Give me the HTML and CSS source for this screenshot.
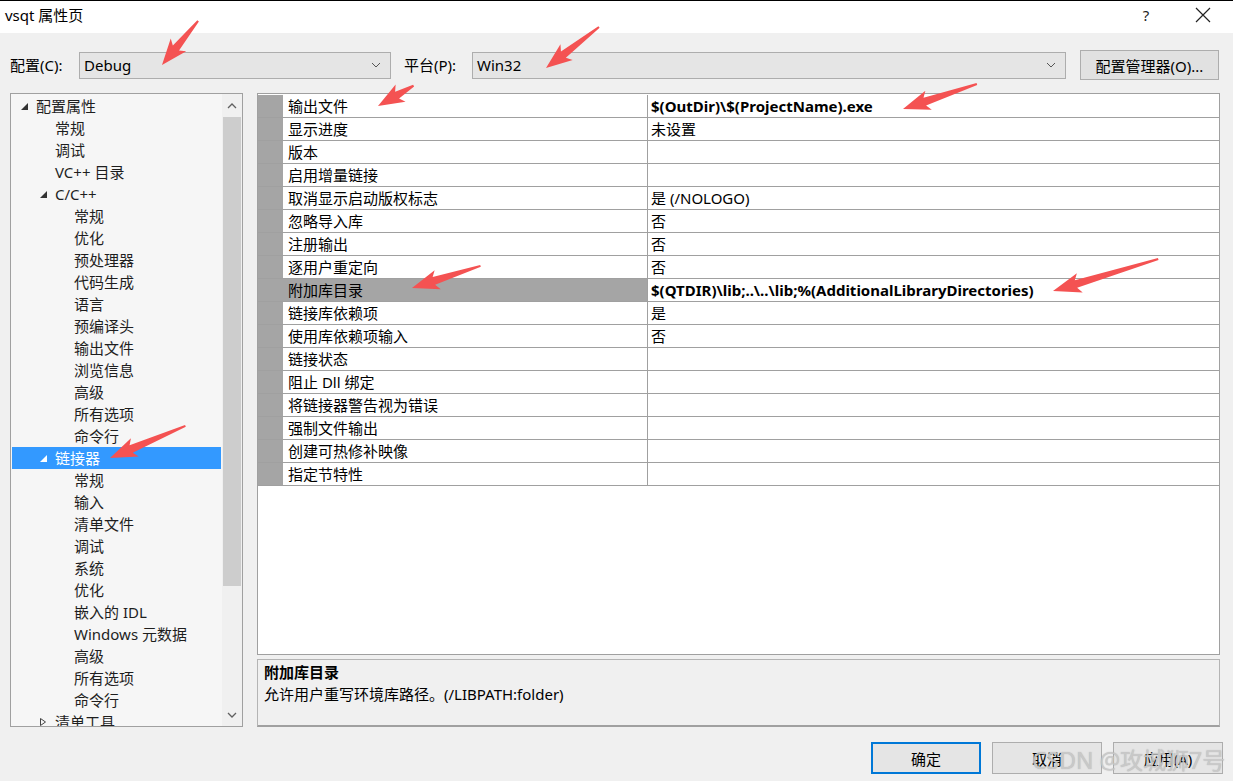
FILE: index.html
```html
<!DOCTYPE html>
<html lang="zh-CN">
<head>
    <meta charset="UTF-8">
    <title>vsqt 属性页</title>
    <link rel="stylesheet" href="styles.css">
</head>
<body>
    <!-- Title bar -->
    <div class="titlebar">
        <span class="title">vsqt 属性页</span>
        <div class="title-buttons">
            <span class="help">?</span>
            <svg class="close" width="16" height="16" viewBox="0 0 16 16">
                <path d="M1 1 L15 15 M15 1 L1 15" stroke="#222" stroke-width="1.2" fill="none"/>
            </svg>
        </div>
    </div>

    <!-- Configuration row -->
    <div class="config-row">
        <label class="cfg-label">配置(C):</label>
        <div class="combo combo-config">
            <span>Debug</span>
            <svg class="chevron" width="10" height="6" viewBox="0 0 10 6"><path d="M1 1 L5 5 L9 1" stroke="#555" fill="none"/></svg>
        </div>
        <label class="cfg-label platform-label">平台(P):</label>
        <div class="combo combo-platform">
            <span>Win32</span>
            <svg class="chevron" width="10" height="6" viewBox="0 0 10 6"><path d="M1 1 L5 5 L9 1" stroke="#555" fill="none"/></svg>
        </div>
        <button class="btn manager-btn">配置管理器(O)...</button>
    </div>

    <div class="main">
        <!-- Tree -->
        <div class="tree">
            <ul class="tree-list">
                <li class="lvl0"><span class="tog"><svg width="9" height="9" viewBox="0 0 9 9"><polygon points="8,1 8,8 1,8" fill="#333"/></svg></span>配置属性</li>
                <li class="lvl1"><span class="tog"></span>常规</li>
                <li class="lvl1"><span class="tog"></span>调试</li>
                <li class="lvl1"><span class="tog"></span>VC++ 目录</li>
                <li class="lvl1"><span class="tog"><svg width="9" height="9" viewBox="0 0 9 9"><polygon points="8,1 8,8 1,8" fill="#333"/></svg></span>C/C++</li>
                <li class="lvl2"><span class="tog"></span>常规</li>
                <li class="lvl2"><span class="tog"></span>优化</li>
                <li class="lvl2"><span class="tog"></span>预处理器</li>
                <li class="lvl2"><span class="tog"></span>代码生成</li>
                <li class="lvl2"><span class="tog"></span>语言</li>
                <li class="lvl2"><span class="tog"></span>预编译头</li>
                <li class="lvl2"><span class="tog"></span>输出文件</li>
                <li class="lvl2"><span class="tog"></span>浏览信息</li>
                <li class="lvl2"><span class="tog"></span>高级</li>
                <li class="lvl2"><span class="tog"></span>所有选项</li>
                <li class="lvl2"><span class="tog"></span>命令行</li>
                <li class="lvl1 selected"><span class="tog"><svg width="9" height="9" viewBox="0 0 9 9"><polygon points="8,1 8,8 1,8" fill="#fff"/></svg></span>链接器</li>
                <li class="lvl2"><span class="tog"></span>常规</li>
                <li class="lvl2"><span class="tog"></span>输入</li>
                <li class="lvl2"><span class="tog"></span>清单文件</li>
                <li class="lvl2"><span class="tog"></span>调试</li>
                <li class="lvl2"><span class="tog"></span>系统</li>
                <li class="lvl2"><span class="tog"></span>优化</li>
                <li class="lvl2"><span class="tog"></span>嵌入的 IDL</li>
                <li class="lvl2"><span class="tog"></span>Windows 元数据</li>
                <li class="lvl2"><span class="tog"></span>高级</li>
                <li class="lvl2"><span class="tog"></span>所有选项</li>
                <li class="lvl2"><span class="tog"></span>命令行</li>
                <li class="lvl1"><span class="tog"><svg width="8" height="10" viewBox="0 0 8 10"><polygon points="1.5,1.5 6.5,5 1.5,8.5" fill="none" stroke="#444"/></svg></span>清单工具</li>
            </ul>
            <div class="tree-scroll">
                <div class="scroll-btn">
                    <svg width="10" height="6" viewBox="0 0 10 6"><path d="M1 5 L5 1 L9 5" stroke="#606060" stroke-width="1.3" fill="none"/></svg>
                </div>
                <div class="scroll-thumb"></div>
                <div class="scroll-track"></div>
                <div class="scroll-btn">
                    <svg width="10" height="6" viewBox="0 0 10 6"><path d="M1 1 L5 5 L9 1" stroke="#606060" stroke-width="1.3" fill="none"/></svg>
                </div>
            </div>
        </div>

        <div class="right-col">
            <!-- Property grid -->
            <div class="prop-grid">
                <div class="prop-row"><div class="gutter"></div><div class="name">输出文件</div><div class="value bold">$(OutDir)\$(ProjectName).exe</div></div>
                <div class="prop-row"><div class="gutter"></div><div class="name">显示进度</div><div class="value">未设置</div></div>
                <div class="prop-row"><div class="gutter"></div><div class="name">版本</div><div class="value"></div></div>
                <div class="prop-row"><div class="gutter"></div><div class="name">启用增量链接</div><div class="value"></div></div>
                <div class="prop-row"><div class="gutter"></div><div class="name">取消显示启动版权标志</div><div class="value">是 (/NOLOGO)</div></div>
                <div class="prop-row"><div class="gutter"></div><div class="name">忽略导入库</div><div class="value">否</div></div>
                <div class="prop-row"><div class="gutter"></div><div class="name">注册输出</div><div class="value">否</div></div>
                <div class="prop-row"><div class="gutter"></div><div class="name">逐用户重定向</div><div class="value">否</div></div>
                <div class="prop-row active"><div class="gutter"></div><div class="name">附加库目录</div><div class="value bold">$(QTDIR)\lib;..\..\lib;%(AdditionalLibraryDirectories)</div></div>
                <div class="prop-row"><div class="gutter"></div><div class="name">链接库依赖项</div><div class="value">是</div></div>
                <div class="prop-row"><div class="gutter"></div><div class="name">使用库依赖项输入</div><div class="value">否</div></div>
                <div class="prop-row"><div class="gutter"></div><div class="name">链接状态</div><div class="value"></div></div>
                <div class="prop-row"><div class="gutter"></div><div class="name">阻止 Dll 绑定</div><div class="value"></div></div>
                <div class="prop-row"><div class="gutter"></div><div class="name">将链接器警告视为错误</div><div class="value"></div></div>
                <div class="prop-row"><div class="gutter"></div><div class="name">强制文件输出</div><div class="value"></div></div>
                <div class="prop-row"><div class="gutter"></div><div class="name">创建可热修补映像</div><div class="value"></div></div>
                <div class="prop-row"><div class="gutter"></div><div class="name">指定节特性</div><div class="value"></div></div>
            </div>

            <!-- Description -->
            <div class="desc">
                <div class="desc-title">附加库目录</div>
                <div class="desc-text">允许用户重写环境库路径。(/LIBPATH:folder)</div>
            </div>
        </div>
    </div>

    <div class="footer">
        <button class="btn dlg-btn default">确定</button>
        <button class="btn dlg-btn">取消</button>
        <button class="btn dlg-btn">应用(A)</button>
    </div>

    <div class="watermark">CSDN @攻城狮7号</div>

    <!-- Red annotation arrows -->
    <svg class="arrows" width="1233" height="781" viewBox="0 0 1233 781">
        <g fill="#f45252">
            <polygon transform="translate(162,65) rotate(-50.7)" points="0,0 26,-10 22,-4 57,-1 57,1 22,4 26,10"/>
            <polygon transform="translate(546,68) rotate(-37.7)" points="0,0 26,-10 22,-4 67,-1 67,1 22,4 26,10"/>
            <polygon transform="translate(378,106) rotate(-29.7)" points="0,0 26,-10 22,-4 41,-1 41,1 22,4 26,10"/>
            <polygon transform="translate(903,109) rotate(-18.7)" points="0,0 27,-10 23,-4 78,-1 78,1 23,4 27,10"/>
            <polygon transform="translate(412,288) rotate(-17.9)" points="0,0 27,-10 23,-4 72,-1 72,1 23,4 27,10"/>
            <polygon transform="translate(1053,291) rotate(-16.9)" points="0,0 28,-10 24,-4 110,-1 110,1 24,4 28,10"/>
            <polygon transform="translate(110,458) rotate(-23.1)" points="0,0 27,-10 23,-4 82,-1 82,1 23,4 27,10"/>
        </g>
    </svg>
</body>
</html>
```

FILE: styles.css
```css
body {
    margin: 0;
    width: 1233px;
    height: 781px;
    overflow: hidden;
    position: relative;
    background: #f0f0f0;
    font-family: "Noto Sans", "Noto Sans CJK SC", sans-serif;
    font-size: 15px;
    color: #000;
}

/* title bar */
.titlebar {
    height: 32px;
    border-top: 1px solid #000;
    background: #fff;
    display: flex;
    align-items: center;
    justify-content: space-between;
    padding: 0 0 0 5px;
}

.title {
    font-size: 15px;
    line-height: 20px;
    margin-top: -4px;
}

.title-buttons {
    display: flex;
    align-items: center;
    margin-top: -4px;
}

.help {
    font-size: 15px;
    width: 16px;
    text-align: center;
    margin-right: 41px;
    color: #222;
}

.close {
    margin-right: 22px;
}

/* config row */
.config-row {
    display: flex;
    align-items: center;
    height: 30px;
    margin-top: 17px;
    padding-left: 10px;
}

.cfg-label {
    width: 69px;
    line-height: 20px;
}

.platform-label {
    margin-left: 13px;
    width: 68px;
}

.combo {
    height: 27px;
    box-sizing: border-box;
    border: 1px solid #adadad;
    background: #e5e5e5;
    display: flex;
    align-items: center;
    justify-content: space-between;
    padding: 0 9px 0 4px;
    line-height: 20px;
}

.combo-config { width: 312px; }
.combo-platform { width: 594px; }

.btn {
    font-family: "Noto Sans", "Noto Sans CJK SC", sans-serif;
    font-size: 15px;
    color: #000;
    background: #e1e1e1;
    border: 1px solid #adadad;
    padding: 0;
}

.manager-btn {
    width: 139px;
    height: 30px;
    margin-left: 14px;
}

/* main area */
.main {
    display: flex;
    height: 634px;
    margin-top: 13px;
    padding-left: 10px;
}

.tree {
    width: 233px;
    box-sizing: border-box;
    border: 1px solid #a0a0a0;
    background: #f6f6f6;
    display: flex;
}

.tree-list {
    list-style: none;
    margin: 0;
    padding: 1px 1px 0 1px;
    flex: 1;
    overflow: hidden;
}

.tree-list li {
    height: 22px;
    line-height: 22px;
    display: flex;
    align-items: center;
    white-space: nowrap;
    color: #1e1e1e;
}

.tog {
    width: 16px;
    flex-shrink: 0;
    display: flex;
    align-items: center;
}

.lvl0 { padding-left: 8px; }
.lvl1 { padding-left: 27px; }
.lvl2 { padding-left: 46px; }

.tree-list li.selected {
    background: #3399ff;
    color: #fff;
}

.tree-scroll {
    width: 20px;
    display: flex;
    flex-direction: column;
    background: #f0f0f0;
}

.scroll-btn {
    height: 23px;
    display: flex;
    align-items: center;
    justify-content: center;
}

.scroll-thumb {
    height: 469px;
    margin: 0 1px;
    background: #cdcdcd;
}

.scroll-track {
    flex: 1;
}

.right-col {
    width: 963px;
    margin-left: 14px;
    display: flex;
    flex-direction: column;
    gap: 4px;
}

/* property grid */
.prop-grid {
    height: 562px;
    box-sizing: border-box;
    border: 1px solid #a0a0a0;
    background: #fff;
    padding-top: 1px;
}

.prop-row {
    display: grid;
    grid-template-columns: 25px 365px 1fr;
    height: 23px;
    box-sizing: border-box;
    border-bottom: 1px solid #a0a0a0;
    line-height: 22px;
}

.gutter {
    background: #a5a5a5;
}

.name {
    padding-left: 5px;
    border-right: 1px solid #a0a0a0;
    white-space: nowrap;
}

.value {
    padding-left: 3px;
    white-space: nowrap;
}

.bold {
    font-weight: bold;
}

.prop-row.active .name {
    background: #a5a5a5;
}

/* description */
.desc {
    height: 68px;
    box-sizing: border-box;
    border: 1px solid #b4b4b4;
    border-bottom: 2px solid #a0a0a0;
    padding: 1px 0 0 6px;
}

.desc-title {
    font-weight: bold;
    line-height: 22px;
}

.desc-text {
    line-height: 23px;
}

/* dialog buttons */
.footer {
    display: flex;
    justify-content: flex-end;
    gap: 11px;
    margin-top: 15px;
    padding-right: 10px;
}

.dlg-btn {
    width: 110px;
    height: 32px;
    background: #e5e5e5;
}

.dlg-btn.default {
    border: 2px solid #0078d7;
}

.watermark {
    position: absolute;
    left: 1032px;
    top: 744px;
    font-size: 23px;
    line-height: 32px;
    color: rgba(205, 205, 205, 0.85);
    text-shadow: 0 0 1px rgba(120, 120, 120, 0.5);
    white-space: nowrap;
}

.arrows {
    position: absolute;
    left: 0;
    top: 0;
    pointer-events: none;
}
```
